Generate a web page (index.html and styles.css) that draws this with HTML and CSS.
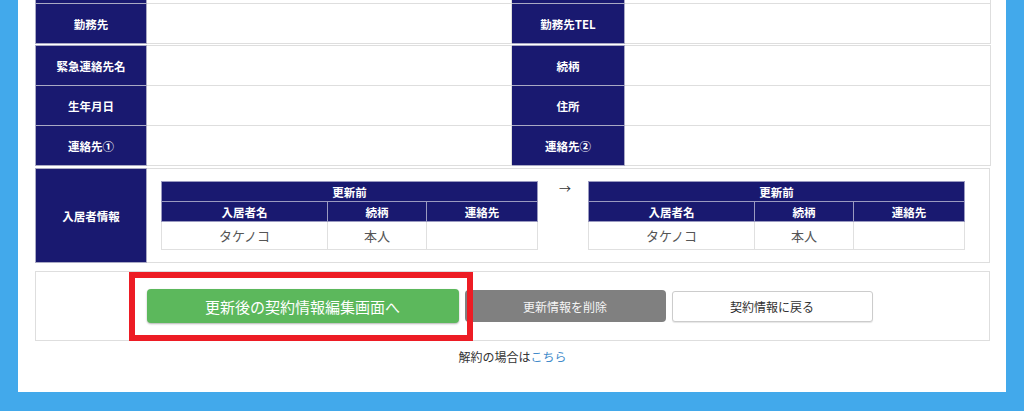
FILE: index.html
```html
<!DOCTYPE html>
<html lang="ja">
<head>
  <meta charset="UTF-8">
  <title>契約情報の更新</title>
  <link rel="stylesheet" href="styles.css">
</head>
<body>
  <div class="page">
    <div class="panel">
      <table class="info-table">
        <colgroup>
          <col class="col-label"><col class="col-value"><col class="col-label-r"><col class="col-value-r">
        </colgroup>
        <tr>
          <th></th><td></td><th></th><td></td>
        </tr>
        <tr>
          <th>勤務先</th><td></td><th>勤務先TEL</th><td></td>
        </tr>
      </table>
      <table class="info-table">
        <colgroup>
          <col class="col-label"><col class="col-value"><col class="col-label-r"><col class="col-value-r">
        </colgroup>
        <tr>
          <th>緊急連絡先名</th><td></td><th>続柄</th><td></td>
        </tr>
        <tr>
          <th>生年月日</th><td></td><th>住所</th><td></td>
        </tr>
        <tr>
          <th>連絡先①</th><td></td><th>連絡先②</th><td></td>
        </tr>
      </table>
      <table class="info-table resident-table">
        <colgroup>
          <col class="col-label"><col>
        </colgroup>
        <tr>
          <th>入居者情報</th>
          <td class="resident-cell">
            <div class="resident-compare">
              <table class="sub-table">
                <colgroup><col class="sub-name"><col class="sub-rel"><col class="sub-tel"></colgroup>
                <tr><th colspan="3">更新前</th></tr>
                <tr><th>入居者名</th><th>続柄</th><th>連絡先</th></tr>
                <tr><td>タケノコ</td><td>本人</td><td></td></tr>
              </table>
              <div class="arrow">→</div>
              <table class="sub-table">
                <colgroup><col class="sub-name"><col class="sub-rel"><col class="sub-tel"></colgroup>
                <tr><th colspan="3">更新前</th></tr>
                <tr><th>入居者名</th><th>続柄</th><th>連絡先</th></tr>
                <tr><td>タケノコ</td><td>本人</td><td></td></tr>
              </table>
            </div>
          </td>
        </tr>
      </table>

      <div class="actions">
        <a class="btn btn-green" href="#">更新後の契約情報編集画面へ<span class="highlight"></span></a>
        <a class="btn btn-gray" href="#">更新情報を削除</a>
        <a class="btn btn-white" href="#">契約情報に戻る</a>
      </div>
      <p class="cancel-note">解約の場合は<a href="#">こちら</a></p>
    </div>
  </div>
</body>
</html>
```

FILE: styles.css
```css
body {
  margin: 0;
  background: #42a9eb;
  font-family: "Noto Sans CJK JP", "Noto Sans", sans-serif;
  color: #333;
  overflow: hidden;
}
.page {
  padding: 0 18px 19px;
}
.panel {
  background: #fff;
  margin-top: -37px;
  padding: 0 16px 28px 17px;
}

/* main info tables */
.info-table {
  width: 100%;
  border-collapse: collapse;
  table-layout: fixed;
  border: 1px solid #d4d4d4;
}
.info-table + .info-table {
  margin-top: 1px;
}
.info-table + .resident-table {
  margin-top: 2px;
}
.col-label { width: 111px; }
.col-value { width: 365px; }
.col-label-r { width: 113px; }
.col-value-r { width: 366px; }
.info-table > tbody > tr > th,
.info-table > tbody > tr > td {
  height: 39px;
  padding: 0;
  border: 1px solid #dedede;
}
.info-table > tbody > tr > th {
  background: #191970;
  border-color: #a9a9c4;
  color: #fff;
  font-size: 11.5px;
  font-weight: bold;
  text-align: center;
}

/* resident comparison */
.resident-cell {
  padding: 12px 24px 12px 14px !important;
}
.resident-compare {
  display: flex;
  align-items: flex-start;
}
.arrow {
  flex: 0 0 50px;
  text-align: center;
  font-size: 12px;
  line-height: 14px;
  padding: 1px 0 0 4px;
  box-sizing: border-box;
}
.sub-table {
  flex: 0 0 376px;
  width: 376px;
  border-collapse: collapse;
  table-layout: fixed;
}
.sub-name { width: 166px; }
.sub-rel { width: 99px; }
.sub-tel { width: 111px; }
.sub-table th {
  height: 19px;
  padding: 0;
  background: #191970;
  border: 1px solid #9a9ac0;
  color: #fff;
  font-size: 11.5px;
  font-weight: bold;
  text-align: center;
}
.sub-table td {
  height: 27px;
  padding: 0;
  border: 1px solid #e0e0e0;
  color: #555;
  font-size: 13px;
  text-align: center;
}

/* buttons */
.actions {
  margin-top: 8px;
  border: 1px solid #dedede;
  padding: 17px 6px 17px 0;
  display: flex;
  justify-content: center;
  align-items: center;
  gap: 6px;
}
.btn {
  display: flex;
  align-items: center;
  justify-content: center;
  box-sizing: border-box;
  text-decoration: none;
  border-radius: 4px;
}
.btn-green {
  position: relative;
  width: 312px;
  height: 34px;
  background: #5cb85c;
  color: #fff;
  font-size: 15px;
  box-shadow: 0 1px 2px rgba(0, 0, 0, 0.3);
}
.highlight {
  position: absolute;
  top: -17px;
  bottom: -18px;
  left: -18px;
  right: -14px;
  border: 6px solid #ed1c24;
  z-index: 2;
  pointer-events: none;
}
.btn-gray {
  width: 201px;
  height: 32px;
  background: #808080;
  color: #f5f5f5;
  font-size: 12px;
}
.btn-white {
  width: 201px;
  height: 31px;
  background: #fff;
  border: 1px solid #ccc;
  border-radius: 3px;
  color: #333;
  font-size: 12px;
  box-shadow: 0 1px 1px rgba(0, 0, 0, 0.1);
}

.cancel-note {
  margin: 9px 0 0;
  text-align: center;
  font-size: 12px;
  line-height: 14px;
}
.cancel-note a {
  color: #428bca;
  text-decoration: none;
}
```
